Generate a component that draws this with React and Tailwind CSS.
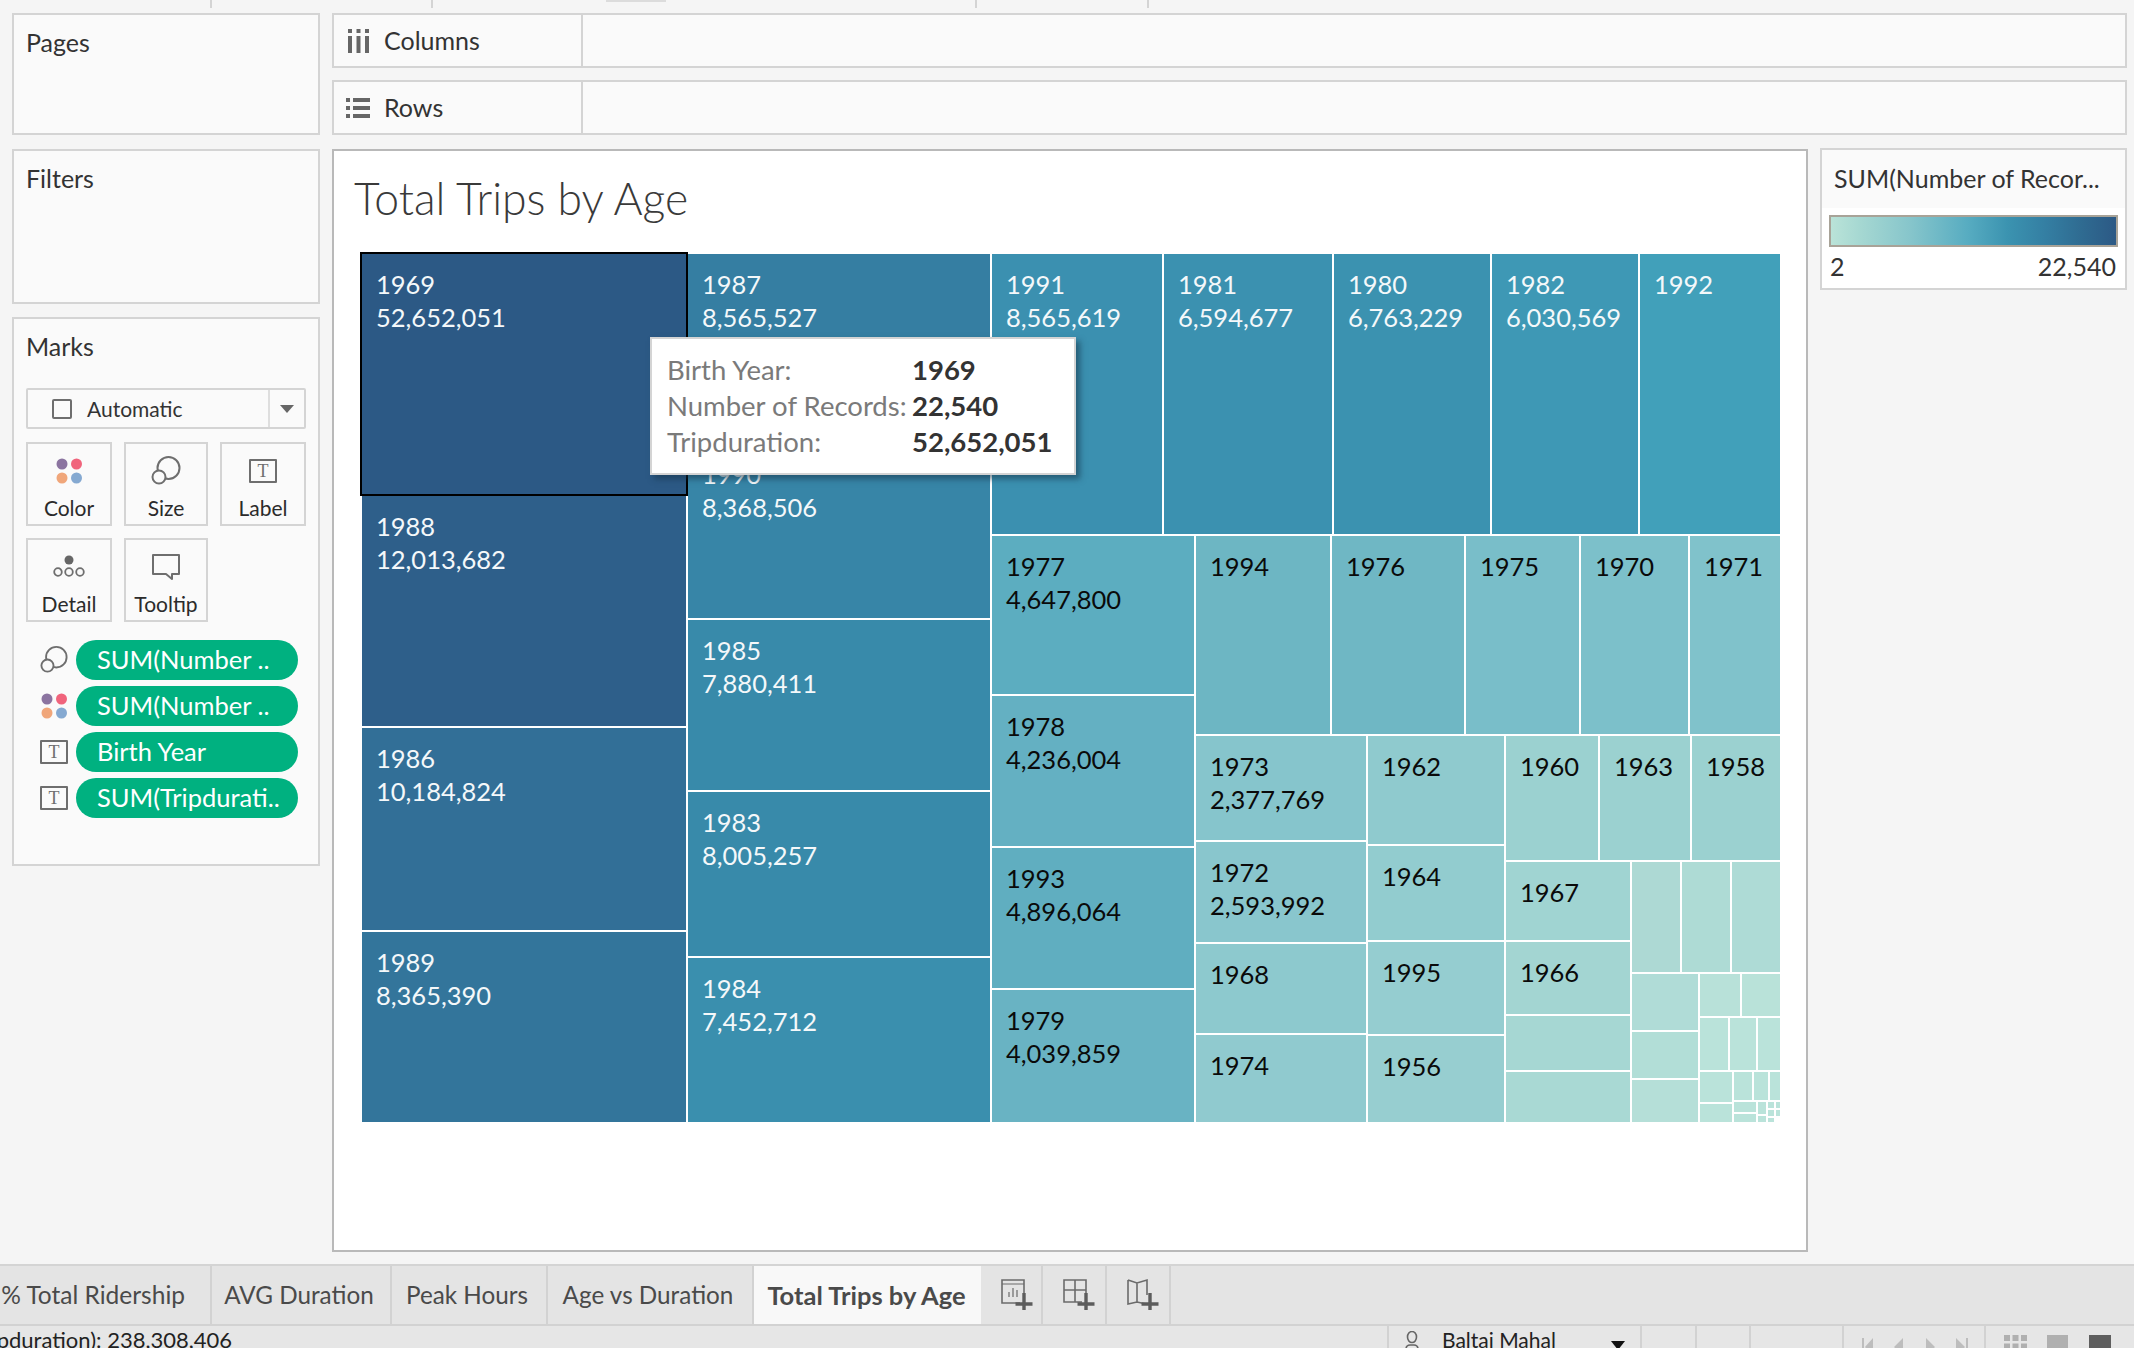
import React from "react";

const F = { fontFamily: '"Lato", "Noto Sans", sans-serif' };

const L = (s, bg, y, v, dark) => ({ s, bg, y, v, dark });
const N = (d, s, c) => ({ d, s, c });
const P = "#bae3da";

const tree = N("row", 1418, [
  N("col", 324, [
    { ...L(240, "#2c5985", "1969", "52,652,051"), sel: true },
    L(230, "#2e5f8a", "1988", "12,013,682"),
    L(202, "#326f97", "1986", "10,184,824"),
    L(190, "#33759b", "1989", "8,365,390"),
  ]),
  N("col", 302, [
    L(188, "#357ea2", "1987", "8,565,527"),
    L(174, "#3785a7", "1990", "8,368,506"),
    L(170, "#388aaa", "1985", "7,880,411"),
    L(164, "#388aaa", "1983", "8,005,257"),
    L(164, "#3a8fae", "1984", "7,452,712"),
  ]),
  N("col", 788, [
    N("row", 280, [
      L(170, "#3b90b0", "1991", "8,565,619"),
      L(168, "#3b91b0", "1981", "6,594,677"),
      L(156, "#3b92b0", "1980", "6,763,229"),
      L(146, "#3e98b5", "1982", "6,030,569"),
      L(140, "#41a0ba", "1992"),
    ]),
    N("row", 586, [
      N("col", 202, [
        L(158, "#5cadc0", "1977", "4,647,800", true),
        L(150, "#64b0c2", "1978", "4,236,004", true),
        L(140, "#60aec0", "1993", "4,896,064", true),
        L(132, "#69b3c3", "1979", "4,039,859", true),
      ]),
      N("col", 584, [
        N("row", 198, [
          L(134, "#6db6c3", "1994", undefined, true),
          L(132, "#6fb7c4", "1976", undefined, true),
          L(113, "#79bec9", "1975", undefined, true),
          L(107, "#7cc0ca", "1970", undefined, true),
          L(90, "#80c2cb", "1971", undefined, true),
        ]),
        N("row", 386, [
          N("col", 170, [
            L(104, "#86c5cc", "1973", "2,377,769", true),
            L(100, "#89c6cd", "1972", "2,593,992", true),
            L(89, "#8dc9ce", "1968", undefined, true),
            L(87, "#90cacf", "1974", undefined, true),
          ]),
          N("col", 136, [
            L(108, "#8fcace", "1962", undefined, true),
            L(94, "#92cccf", "1964", undefined, true),
            L(92, "#95cdd0", "1995", undefined, true),
            L(86, "#97ced0", "1956", undefined, true),
          ]),
          N("col", 274, [
            N("row", 124, [
              L(92, "#9bd1d0", "1960", undefined, true),
              L(90, "#9bd1d0", "1963", undefined, true),
              L(88, "#9bd1d0", "1958", undefined, true),
            ]),
            N("row", 260, [
              N("col", 124, [
                L(78, "#a0d4d2", "1967", undefined, true),
                L(72, "#a3d5d2", "1966", undefined, true),
                L(54, "#a6d7d3"),
                L(50, "#a9d9d4"),
              ]),
              N("col", 148, [
                N("row", 110, [L(48, "#add9d4"), L(48, "#aedbd5"), L(48, "#aedbd6")]),
                N("row", 148, [
                  N("col", 66, [L(56, "#b0dcd7"), L(46, "#b2ded7"), L(42, "#b5dfd8")]),
                  N("col", 80, [
                    N("row", 42, [L(40, "#b8e1d9"), L(38, "#b9e2d9")]),
                    N("row", 52, [L(28, P), L(26, P), L(22, P)]),
                    N("row", 50, [
                      N("col", 32, [L(30, P), L(18, P)]),
                      N("col", 46, [
                        N("row", 28, [L(18, P), L(14, P), L(10, P)]),
                        N("row", 20, [
                          N("col", 22, [L(10, P), L(8, P)]),
                          N("col", 8, [L(12, P), L(6, P)]),
                          N("col", 12, [
                            N("row", 6, [L(6, P), L(4, P)]),
                            N("row", 6, [L(6, P), L(4, P)]),
                            N("row", 4, [L(6, P)]),
                          ]),
                        ]),
                      ]),
                    ]),
                  ]),
                ]),
              ]),
            ]),
          ]),
        ]),
      ]),
    ]),
  ]),
]);

function Node({ n, axis }) {
  const sizeStyle = axis === "row" ? { width: n.s } : axis === "col" ? { height: n.s } : { width: n.s, height: 868 };
  if (n.c) {
    return (
      <div
        style={sizeStyle}
        className={n.d === "row" ? "flex flex-row gap-[2px] shrink-0" : "flex flex-col gap-[2px] shrink-0"}
      >
        {n.c.map((k, i) => (
          <Node key={i} n={k} axis={n.d} />
        ))}
      </div>
    );
  }
  return (
    <div
      style={{ ...sizeStyle, backgroundColor: n.bg }}
      className={
        "shrink-0 text-[25.5px] leading-[33px] whitespace-nowrap overflow-hidden " +
        (n.y ? "pl-[14px] pt-[14px] " : "") +
        (n.dark ? "text-[#0a0a0a] " : "text-[#f4f8fa] ") +
        (n.sel ? "outline-2 outline-black relative z-10" : "")
      }
    >
      {n.y && <div>{n.y}</div>}
      {n.v && <div>{n.v}</div>}
    </div>
  );
}

function Dots({ className }) {
  return (
    <svg width="26" height="26" viewBox="0 0 26 26" className={className}>
      <circle cx="6" cy="6" r="5.5" fill="#8b74a0" />
      <circle cx="20.5" cy="6" r="5.5" fill="#f0647c" />
      <circle cx="6" cy="20" r="5.5" fill="#f0a67a" />
      <circle cx="20.5" cy="20" r="5.5" fill="#85a9d1" />
    </svg>
  );
}
function SizeIcon() {
  return (
    <svg width="30" height="30" viewBox="0 0 30 30" fill="none" stroke="#6e6e6e" strokeWidth="2">
      <circle cx="17.5" cy="12" r="11" />
      <circle cx="8" cy="21" r="6.5" fill="#fafafa" />
    </svg>
  );
}
function TBox({ size = "w-[28px] h-[24px]" }) {
  return (
    <div
      className={
        size +
        " border-2 border-[#6e6e6e] rounded-[1px] flex items-center justify-center text-[#6e6e6e] text-[18px] leading-none"
      }
      style={{ fontFamily: '"Liberation Serif", serif' }}
    >
      T
    </div>
  );
}
function DetailIcon() {
  return (
    <svg width="32" height="24" viewBox="0 0 32 24" fill="none" stroke="#6e6e6e" strokeWidth="1.8">
      <circle cx="16" cy="5" r="4.5" fill="#666" stroke="none" />
      <circle cx="5" cy="17" r="3.8" />
      <circle cx="16" cy="17" r="3.8" />
      <circle cx="27" cy="17" r="3.8" />
    </svg>
  );
}
function TooltipIcon() {
  return (
    <svg width="30" height="28" viewBox="0 0 30 28" fill="none" stroke="#6e6e6e" strokeWidth="2" strokeLinejoin="round">
      <path d="M2 2h26v19h-7v5l-6-5H2z" />
    </svg>
  );
}

function Card({ label, icon }) {
  return (
    <div className="h-[84px] border-2 border-[#d4d4d4] flex flex-col items-center text-[21px] leading-[24px] text-[#2b2b2b]">
      <div className="h-[52px] flex items-center justify-center pt-[2px]">{icon}</div>
      <div>{label}</div>
    </div>
  );
}

function Pill({ icon, text }) {
  return (
    <div className="flex items-center h-[40px]">
      <div className="w-[28px] ml-[26px] mr-[8px] flex justify-center">{icon}</div>
      <div className="w-[222px] h-[40px] rounded-full bg-[#00b180] text-white text-[25.5px] leading-[38px] pl-[21px] whitespace-nowrap">
        {text}
      </div>
    </div>
  );
}

function Panel({ title, className, children }) {
  return (
    <div className={"border-2 border-[#d4d4d4] bg-[#fafafa] " + className}>
      <div className="pl-[12px] pt-[11px] text-[25px] leading-[32px] text-[#333]">{title}</div>
      {children}
    </div>
  );
}

function Shelf({ icon, label, className }) {
  return (
    <div className={"h-[55px] border-2 border-[#d4d4d4] bg-[#fafafa] flex " + className}>
      <div className="w-[249px] border-r-2 border-[#d4d4d4] flex items-center text-[25px] text-[#333]">
        <div className="w-[50px] flex justify-center pr-[2px]">{icon}</div>
        {label}
      </div>
    </div>
  );
}

function Tab({ w, children, active, right, icon }) {
  return (
    <div
      style={{ width: w }}
      className={
        "h-full shrink-0 flex items-center whitespace-nowrap overflow-hidden " +
        (active ? "text-[25.5px] pr-[2px] " : right ? "text-[24.5px] " : "text-[24.25px] ") +
        (right ? "justify-end pr-[25px] " : icon ? "justify-start pl-[18px] " : active ? "justify-center " : "justify-center pr-[4px] ") +
        (active ? "bg-[#f8f8f8] font-bold text-[#4a4a4a]" : "border-r-2 border-[#d2d2d2] text-[#4a4a4a]")
      }
    >
      {children}
    </div>
  );
}

function PlusIcon({ kind }) {
  return (
    <svg width="34" height="36" viewBox="0 0 34 36" fill="none" stroke="#6b6b6b" strokeWidth="1.6">
      {kind === "sheet" && (
        <>
          <path d="M21 26H3V3h22v15" />
          <path d="M3 7h22M10 20v-5M14 20V11M18 20v-7" strokeWidth="1.2" />
        </>
      )}
      {kind === "dash" && (
        <>
          <path d="M21 25H3V3h22v15" />
          <path d="M3 13h22M14 3v22" />
        </>
      )}
      {kind === "story" && <path d="M3 3l9 3 10-3v15M21 27l-9-2-9 2V3M12 6v19" />}
      <path d="M27 16v17M18.5 27h17" stroke="#5c5c5c" strokeWidth="3.4" transform="translate(-2 0)" />
    </svg>
  );
}

export default function App() {
  return (
    <div style={F} className="w-[2134px] h-[1348px] overflow-hidden bg-[#f5f5f5] flex flex-col relative">
      {/* top strip */}
      <div className="h-[13px] shrink-0 flex items-start pl-[210px]">
        <div className="w-[2px] h-[8px] bg-[#d4d4d4]" />
        <div className="w-[219px]" />
        <div className="w-[2px] h-[8px] bg-[#d4d4d4]" />
        <div className="w-[173px]" />
        <div className="w-[60px] h-[2px] bg-[#dcdcdc]" />
        <div className="w-[309px]" />
        <div className="w-[2px] h-[8px] bg-[#d4d4d4]" />
        <div className="w-[170px]" />
        <div className="w-[2px] h-[8px] bg-[#d4d4d4]" />
      </div>

      {/* body */}
      <div className="flex-1 flex pl-[12px] gap-[12px] min-h-0">
        {/* left */}
        <div className="w-[308px] shrink-0 flex flex-col">
          <Panel title="Pages" className="h-[122px]" />
          <Panel title="Filters" className="h-[155px] mt-[14px]" />
          <Panel title="Marks" className="h-[549px] mt-[13px]">
            <div className="mx-[12px] mt-[26px] h-[41px] border-2 border-[#d4d4d4] rounded-[2px] bg-[#fafafa] flex items-center text-[21px] text-[#333]">
              <div className="w-[20px] h-[20px] border-2 border-[#6e6e6e] rounded-[2px] ml-[24px] mr-[15px]" />
              <div className="flex-1">Automatic</div>
              <div className="w-[36px] h-full border-l-2 border-[#dedede] flex items-center justify-center">
                <div className="w-0 h-0 border-x-[7px] border-x-transparent border-t-[8px] border-t-[#666]" />
              </div>
            </div>
            <div className="mx-[12px] mt-[13px] grid grid-cols-[86px_84px_86px] gap-x-[12px] gap-y-[12px] w-[280px]">
              <Card label="Color" icon={<Dots />} />
              <Card label="Size" icon={<SizeIcon />} />
              <Card label="Label" icon={<TBox />} />
              <Card label="Detail" icon={<DetailIcon />} />
              <Card label="Tooltip" icon={<TooltipIcon />} />
            </div>
            <div className="mt-[18px] flex flex-col gap-[6px]">
              <Pill icon={<SizeIcon />} text="SUM(Number .." />
              <Pill icon={<Dots />} text="SUM(Number .." />
              <Pill icon={<TBox />} text="Birth Year" />
              <Pill icon={<TBox />} text="SUM(Tripdurati.." />
            </div>
          </Panel>
        </div>

        {/* right */}
        <div className="w-[1795px] shrink-0 flex flex-col">
          <Shelf
            className=""
            label="Columns"
            icon={
              <svg width="21" height="24" viewBox="0 0 21 24" fill="#666">
                <path d="M0 0h4v4H0zM8.500 0h4v4h-4zM17 0h4v4h-4zM0 7h4v17H0zM8.500 7h4v17h-4zM17 7h4v17h-4z" />
              </svg>
            }
          />
          <Shelf
            className="mt-[12px]"
            label="Rows"
            icon={
              <svg width="24" height="20" viewBox="0 0 24 20" fill="#666">
                <path d="M0 0h4v4H0zM7 0h17v4H7zM0 8h4v4H0zM7 8h17v4H7zM0 16h4v4H0zM7 16h17v4H7z" />
              </svg>
            }
          />
          <div className="flex mt-[14px] gap-[12px]">
            {/* viz */}
            <div className="w-[1476px] h-[1103px] border-2 border-[#b9b9b9] bg-white shrink-0 relative">
              <div className="pl-[20px] pt-[22px] h-[103px] text-[44.5px] leading-[50px] font-light text-[#3a3a3a]">
                Total Trips by Age
              </div>
              <div className="ml-[28px] relative w-[1418px]">
                <Node n={tree} />
                <div className="absolute left-[288px] top-[83px] w-[426px] h-[138px] border-2 border-[#d4d4d4] bg-white shadow-[4px_4px_6px_rgba(20,50,70,0.55)] z-20 pl-[15px] pt-[13px] text-[27.5px] leading-[36px] whitespace-nowrap grid grid-cols-[245px_1fr] content-start">
                  <div className="text-[#7a7a7a]">Birth Year:</div>
                  <div className="font-bold text-[#333]">1969</div>
                  <div className="text-[#7a7a7a]">Number of Records:</div>
                  <div className="font-bold text-[#333]">22,540</div>
                  <div className="text-[#7a7a7a]">Tripduration:</div>
                  <div className="font-bold text-[#333]">52,652,051</div>
                </div>
              </div>
            </div>
            {/* legend */}
            <div className="w-[307px] h-[142px] -mt-[1px] border-2 border-[#d4d4d4] bg-white shrink-0">
              <div className="h-[58px] bg-[#fafafa] pl-[12px] pt-[12px] text-[25px] leading-[32px] text-[#333] whitespace-nowrap">
                SUM(Number of Recor...
              </div>
              <div className="mx-[7px] mt-[7px] h-[32px] border-2 border-[#a8a398] bg-[linear-gradient(to_right,#bae3d8,#a6d8d2_10%,#86c5cb_28%,#57acc1_48%,#3b93b0_62%,#347fa3_75%,#2f6b91_88%,#2c5985)]" />
              <div className="ml-[8px] mr-[9px] mt-[3px] flex justify-between text-[25px] leading-[32px] text-[#333]">
                <span>2</span>
                <span>22,540</span>
              </div>
            </div>
          </div>
        </div>
      </div>

      {/* tabs */}
      <div className="h-[60px] shrink-0 border-t-2 border-[#d4d4d4] bg-[#e4e4e4] flex">
        <Tab w={212} right>% Total Ridership</Tab>
        <Tab w={180}>AVG Duration</Tab>
        <Tab w={156}>Peak Hours</Tab>
        <Tab w={206}>Age vs Duration</Tab>
        <Tab w={227} active>Total Trips by Age</Tab>
        <Tab w={62} icon><PlusIcon kind="sheet" /></Tab>
        <Tab w={64} icon><PlusIcon kind="dash" /></Tab>
        <Tab w={64} icon><PlusIcon kind="story" /></Tab>
      </div>

      {/* status */}
      <div className="h-[24px] shrink-0 border-t-2 border-[#d2d2d2] bg-[#e6e6e6] flex overflow-hidden text-[#222]">
        <div className="w-[232px] shrink-0 overflow-hidden flex justify-end whitespace-nowrap text-[22px] leading-[28px]">
          SUM(Tripduration): 238,308,406
        </div>
        <div className="w-[1157px] shrink-0 border-r-2 border-[#d2d2d2]" />
        <div className="w-[253px] shrink-0 border-r-2 border-[#d2d2d2] flex text-[21px] leading-[28px]">
          <svg width="18" height="22" viewBox="0 0 18 22" className="ml-[14px] mr-[21px] mt-[5px] shrink-0" fill="none" stroke="#666" strokeWidth="1.6">
            <ellipse cx="9" cy="6" rx="4.5" ry="5.5" />
            <path d="M3 22v-4a4 4 0 0 1 4-4h4a4 4 0 0 1 4 4v4" />
          </svg>
          <span className="whitespace-nowrap">Baltaj Mahal</span>
          <div className="ml-auto mr-[15px] mt-[15px] w-0 h-0 border-x-[7px] border-x-transparent border-t-[9px] border-t-[#111]" />
        </div>
        <div className="w-[55px] shrink-0 border-r-2 border-[#d2d2d2]" />
        <div className="w-[54px] shrink-0 border-r-2 border-[#d2d2d2]" />
        <div className="w-[93px] shrink-0 border-r-2 border-[#d2d2d2]" />
        <div className="w-[142px] shrink-0 border-r-2 border-[#d2d2d2] pl-[18px] pt-[12px]">
          <svg width="106" height="18" viewBox="0 0 106 18" fill="#bdbdbd">
            <path d="M0 0h2v18H0zM11 0v18L3 9zM41 0v18L32 9zM64 0v18l9-9zM94 0v18l9-9zM104 0h2v18h-2z" />
          </svg>
        </div>
        <div className="flex-1 flex items-start pt-[9px] pl-[18px] gap-[20px]">
          <svg width="23" height="18" viewBox="0 0 23 18" fill="#b0b0b0">
            <path d="M0 0h6v6H0zM8.500 0h6v6h-6zM17 0h6v6h-6zM0 8.500h6v6H0zM8.500 8.500h6v6h-6zM17 8.500h6v6h-6z" />
          </svg>
          <div className="w-[21px] h-[22px] bg-[#b0b0b0]" />
          <div className="w-[22px] h-[22px] bg-[#5f5f5f] ml-[1px]" />
        </div>
      </div>
    </div>
  );
}
